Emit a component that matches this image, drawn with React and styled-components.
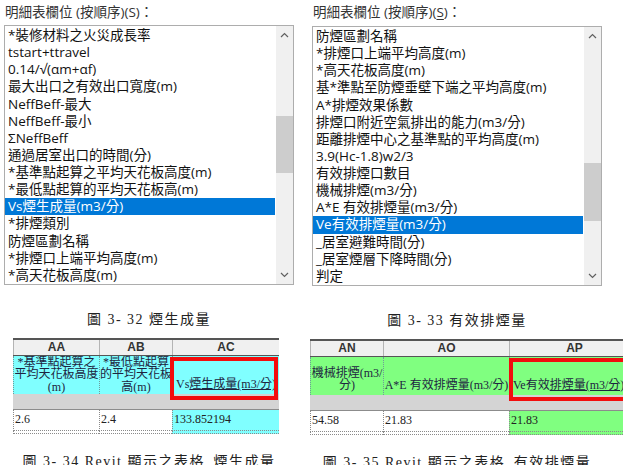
import React from "react";
import styled, { createGlobalStyle } from "styled-components";

const UI_FONT = `"Open Sans", "Noto Sans CJK TC", sans-serif`;
const SERIF_FONT = `"Liberation Serif", "Noto Sans CJK TC", serif`;

const GlobalStyle = createGlobalStyle`
  html, body {
    margin: 0;
    padding: 0;
    background: #fff;
  }
  body {
    width: 623px;
    height: 465px;
    overflow: hidden;
  }
`;

const leftItems = [
  "*裝修材料之火災成長率",
  "tstart+ttravel",
  "0.14/√(αm+αf)",
  "最大出口之有效出口寬度(m)",
  "NeffBeff-最大",
  "NeffBeff-最小",
  "ΣNeffBeff",
  "通過居室出口的時間(分)",
  "*基準點起算之平均天花板高度(m)",
  "*最低點起算的平均天花板高(m)",
  "Vs煙生成量(m3/分)",
  "*排煙類別",
  "防煙區劃名稱",
  "*排煙口上端平均高度(m)",
  "*高天花板高度(m)",
];

const rightItems = [
  "防煙區劃名稱",
  "*排煙口上端平均高度(m)",
  "*高天花板高度(m)",
  "基*準點至防煙垂壁下端之平均高度(m)",
  "A*排煙效果係數",
  "排煙口附近空氣排出的能力(m3/分)",
  "距離排煙中心之基準點的平均高度(m)",
  "3.9(Hc-1.8)w2/3",
  "有效排煙口數目",
  "機械排煙(m3/分)",
  "A*E 有效排煙量(m3/分)",
  "Ve有效排煙量(m3/分)",
  "_居室避難時間(分)",
  "_居室煙層下降時間(分)",
  "判定",
];

const Page = styled.div`
  display: grid;
  grid-template-columns: 310px 313px;
  width: 623px;
  height: 465px;
  overflow: hidden;
`;

const Panel = styled.section`
  display: flex;
  flex-direction: column;
  padding-top: 3px;
  padding-left: ${(p) => p.$inset}px;
  min-width: 0;
  overflow: hidden;
`;

const FieldLabel = styled.div`
  font-family: ${UI_FONT};
  font-size: 13.5px;
  line-height: 18px;
  color: #333;
  padding-left: 1px;
  margin-bottom: ${(p) => p.$gap}px;
  white-space: nowrap;

  u {
    text-decoration: underline;
    text-underline-offset: 2px;
  }
`;

const ListBox = styled.div`
  display: flex;
  width: 290px;
  height: 262px;
  box-sizing: border-box;
  border: 1px solid #adadad;
  background: #fff;
`;

const Items = styled.ul`
  flex: 1;
  margin: 0;
  padding: 1px 1px 0 0;
  list-style: none;
  overflow: hidden;
`;

const Item = styled.li`
  height: 17.14px;
  line-height: 17px;
  padding-left: 3px;
  font-family: ${UI_FONT};
  font-size: 13.5px;
  white-space: nowrap;
  color: ${(p) => (p.$selected ? "#fff" : "#111")};
  background: ${(p) => (p.$selected ? "#0078d7" : "transparent")};
`;

const ScrollBar = styled.div`
  display: flex;
  flex-direction: column;
  width: 17px;
  background: #f0f0f0;
`;

const ArrowButton = styled.div`
  display: flex;
  align-items: center;
  justify-content: center;
  height: 17px;
  flex: none;
`;

const Track = styled.div`
  flex: 1;
`;

const Thumb = styled.div`
  margin-top: ${(p) => p.$top}px;
  height: ${(p) => p.$height}px;
  background: #cdcdcd;
`;

const Chevron = ({ up }) => (
  <svg width="9" height="6" viewBox="0 0 9 6">
    <polyline
      points={up ? "1,5 4.5,1.5 8,5" : "1,1 4.5,4.5 8,1"}
      fill="none"
      stroke="#606060"
      strokeWidth="1.2"
    />
  </svg>
);

const Caption = styled.div`
  width: 290px;
  text-align: center;
  font-family: ${SERIF_FONT};
  font-size: 14px;
  line-height: 20px;
  letter-spacing: 1.5px;
  color: #222;
  white-space: nowrap;
  margin-top: ${(p) => p.$gap}px;
`;

const TableWrap = styled.div`
  position: relative;
  margin-top: 8px;
  margin-left: ${(p) => p.$offset}px;
  width: ${(p) => p.$width}px;
`;

const Row = styled.div`
  display: grid;
  grid-template-columns: ${(p) => p.$cols};
`;

const HeaderRow = styled(Row)`
  height: 18px;
  box-sizing: border-box;
  background: #f0f0f0;
  border-top: 2px solid #555;
  border-bottom: 1px solid #555;
`;

const HeadCell = styled.div`
  display: flex;
  align-items: center;
  justify-content: center;
  border-left: 1px solid #b4b4b4;
  font-family: "Liberation Sans", Arial, sans-serif;
  font-weight: bold;
  font-size: 12px;
  color: #333;
`;

const LabelRow = styled(Row)`
  height: 38px;
  background: ${(p) => p.$fill};
`;

const LabelCell = styled.div`
  display: flex;
  flex-direction: column;
  justify-content: ${(p) => (p.$valign === "top" ? "flex-start" : "flex-end")};
  padding-bottom: ${(p) => (p.$valign === "top" ? 0 : 3)}px;
  border-left: 1px dotted #6f9a9a;
  overflow: hidden;
  text-align: center;
  font-family: ${SERIF_FONT};
  font-size: 12px;
  line-height: 12.5px;
  color: #1e2540;
  white-space: nowrap;

  span {
    text-decoration: underline;
    text-underline-offset: 1px;
  }
`;

const SpacerRow = styled.div`
  height: 15px;
  background: #d4d4d4;
  border-bottom: 1px solid #8c8c8c;
`;

const DataRow = styled(Row)`
  height: ${(p) => p.$height}px;
  overflow: hidden;
`;

const DataCell = styled.div`
  border-left: 1px dotted #8a8a8a;
  border-bottom: 1px dotted #8a8a8a;
  background: ${(p) => p.$fill || "#fff"};
  padding-left: 1px;
  font-family: ${SERIF_FONT};
  font-size: 12px;
  line-height: 19px;
  color: #222;
  white-space: nowrap;
`;

const Highlight = styled.div`
  position: absolute;
  top: 19px;
  left: ${(p) => p.$left}px;
  width: ${(p) => p.$width}px;
  height: 43px;
  box-sizing: border-box;
  border: 4px solid #f20d0d;
  pointer-events: none;
`;

function FieldList({ items, selected, thumbTop, thumbHeight }) {
  return (
    <ListBox>
      <Items>
        {items.map((it, i) => (
          <Item key={i} $selected={i === selected}>
            {it}
          </Item>
        ))}
      </Items>
      <ScrollBar>
        <ArrowButton>
          <Chevron up />
        </ArrowButton>
        <Track>
          <Thumb $top={thumbTop} $height={thumbHeight} />
        </Track>
        <ArrowButton>
          <Chevron />
        </ArrowButton>
      </ScrollBar>
    </ListBox>
  );
}

function RevitTable({ cols, offset, width, fill, heads, labels, values, box }) {
  return (
    <TableWrap $offset={offset} $width={width}>
      <HeaderRow $cols={cols}>
        {heads.map((h) => (
          <HeadCell key={h}>{h}</HeadCell>
        ))}
      </HeaderRow>
      <LabelRow $cols={cols} $fill={fill}>
        {labels.map((l, i) => (
          <LabelCell key={i} $valign={l.valign}>
            {l.content}
          </LabelCell>
        ))}
      </LabelRow>
      <SpacerRow />
      <DataRow $cols={cols} $height={21}>
        {values.map((v, i) => (
          <DataCell key={i} $fill={i === values.length - 1 ? fill : null}>
            {v}
          </DataCell>
        ))}
      </DataRow>
      <DataRow $cols={cols} $height={3}>
        {values.map((v, i) => (
          <DataCell key={i} $fill={i === values.length - 1 ? fill : null} />
        ))}
      </DataRow>
      <Highlight $left={box.left} $width={box.width} />
    </TableWrap>
  );
}

export default function App() {
  return (
    <>
      <GlobalStyle />
      <Page>
        <Panel $inset={4}>
          <FieldLabel $gap={4}>明細表欄位 (按順序)(S)：</FieldLabel>
          <FieldList items={leftItems} selected={10} thumbTop={73} thumbHeight={57} />
          <Caption $gap={25}>圖 3- 32 煙生成量</Caption>
          <RevitTable
            cols="86px 73px 107px"
            offset={9}
            width={266}
            fill="#80ffff"
            heads={["AA", "AB", "AC"]}
            labels={[
              {
                valign: "top",
                content: (
                  <>
                    *基準點起算之
                    <br />
                    平均天花板高度
                    <br />
                    (m)
                  </>
                ),
              },
              {
                valign: "top",
                content: (
                  <>
                    *最低點起算
                    <br />
                    的平均天花板
                    <br />
                    高(m)
                  </>
                ),
              },
              {
                valign: "bottom",
                content: (
                  <div>
                    Vs<span>煙生成量(m3/分)</span>
                  </div>
                ),
              },
            ]}
            values={["2.6", "2.4", "133.852194"]}
            box={{ left: 157, width: 108 }}
          />
          <Caption $gap={18}>圖 3- 34 Revit 顯示之表格_煙生成量</Caption>
        </Panel>

        <Panel $inset={2}>
          <FieldLabel $gap={5}>
            明細表欄位 (按順序)(<u>S</u>)：
          </FieldLabel>
          <FieldList items={rightItems} selected={11} thumbTop={119} thumbHeight={58} />
          <Caption $gap={25}>圖 3- 33 有效排煙量</Caption>
          <RevitTable
            cols="73px 126px 130px"
            offset={-2}
            width={329}
            fill="#80ff80"
            heads={["AN", "AO", "AP"]}
            labels={[
              {
                valign: "bottom",
                content: (
                  <>
                    機械排煙(m3/
                    <br />
                    分)
                  </>
                ),
              },
              { valign: "bottom", content: <div>A*E 有效排煙量(m3/分)</div> },
              {
                valign: "bottom",
                content: (
                  <div style={{ textAlign: "left", paddingLeft: 3 }}>
                    Ve有效<span>排煙量(m3/分)</span>
                  </div>
                ),
              },
            ]}
            values={["54.58", "21.83", "21.83"]}
            box={{ left: 199, width: 140 }}
          />
          <Caption $gap={18}>圖 3- 35 Revit 顯示之表格_有效排煙量</Caption>
        </Panel>
      </Page>
    </>
  );
}
